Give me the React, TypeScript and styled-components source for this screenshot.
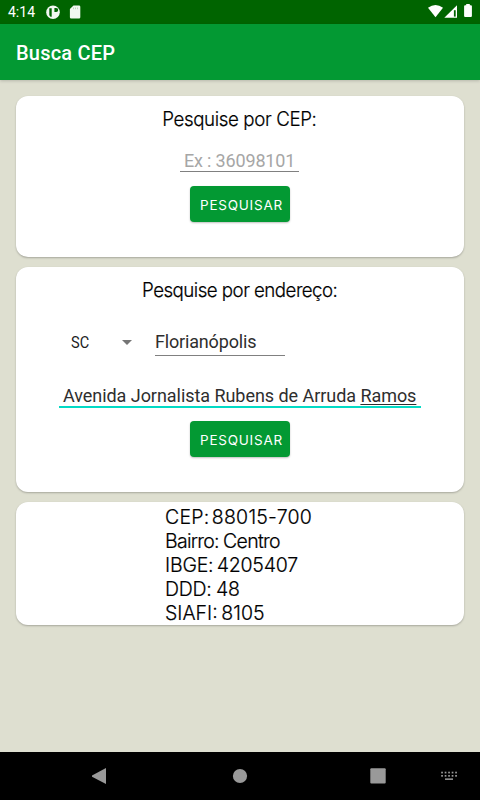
import React from 'react';
import styled, { createGlobalStyle } from 'styled-components';

const GlobalStyle = createGlobalStyle`
  * { box-sizing: border-box; }
  body { margin: 0; background: #dedfd0; }
`;

const Screen = styled.div`
  width: 480px;
  height: 800px;
  display: flex;
  flex-direction: column;
  background: #dedfd0;
  font-family: Roboto, sans-serif;
  overflow: hidden;
`;

const StatusBar = styled.header`
  height: 24px;
  display: flex;
  justify-content: space-between;
  background: #006400;
  color: #fff;
  flex: none;
`;

const Clock = styled.span`
  width: 38px;
  padding-left: 8px;
  font-size: 14px;
  line-height: 24px;
  white-space: nowrap;
`;

const StatusGroup = styled.div`
  display: flex;
`;

const AppBar = styled.div`
  height: 56px;
  flex: none;
  display: flex;
  align-items: center;
  padding: 2px 16px 0;
  background: #039933;
  box-shadow: 0 1px 3px rgba(0, 0, 0, 0.18);
`;

const Title = styled.h1`
  margin: 0;
  font-size: 20px;
  font-weight: 500;
  line-height: 24px;
  letter-spacing: 0.2px;
  color: #fff;
`;

const Content = styled.main`
  flex: 1;
  display: flex;
  flex-direction: column;
  gap: 10px;
  padding: 16px 16px 0;
`;

const Card = styled.section<{ $height: number }>`
  height: ${(p) => p.$height}px;
  display: flex;
  flex-direction: column;
  align-items: center;
  background: #fff;
  border-radius: 12px;
  box-shadow: 0 1px 2px rgba(0, 0, 0, 0.25);
`;

const Heading = styled.h2<{ $spacing: number }>`
  margin: 11px 1px 0 0;
  font-family: Inter, sans-serif;
  font-size: 19.5px;
  font-weight: 300;
  -webkit-text-stroke: 0.2px #000;
  line-height: 24px;
  letter-spacing: ${(p) => p.$spacing}px;
  transform: scaleX(0.96);
  color: #000;
  white-space: nowrap;
`;

const Field = styled.div<{ $width: number; $top: number; $line?: number; $shift?: number; $inset?: number; $active?: boolean; $hint?: boolean }>`
  width: ${(p) => p.$width}px;
  height: ${(p) => (p.$active ? 26 : 25)}px;
  margin-top: ${(p) => p.$top}px;
  margin-right: ${(p) => p.$shift ?? 0}px;
  padding-left: ${(p) => p.$inset ?? 0}px;
  border-bottom: ${(p) => (p.$active ? '2px solid #03dac5' : '1px solid #808080')};
  font-size: 18px;
  line-height: ${(p) => p.$line ?? 28}px;
  letter-spacing: ${(p) => (p.$active ? -0.05 : -0.17)}px;
  color: ${(p) => (p.$hint ? '#a6a6a6' : '#2e2e2e')};
  white-space: nowrap;
`;

const Composing = styled.span`
  text-decoration: underline;
  text-decoration-thickness: 1px;
  text-underline-offset: 2px;
  text-decoration-skip-ink: none;
`;

const SearchButton = styled.button<{ $top: number }>`
  width: 100px;
  height: 36px;
  margin-top: ${(p) => p.$top}px;
  padding: 1px 0 0 3px;
  border: 0;
  border-radius: 4px;
  background: #039933;
  box-shadow: 0 1px 2px rgba(0, 0, 0, 0.25);
  color: #fff;
  font-family: Inter, sans-serif;
  font-size: 13.5px;
  font-weight: 400;
  letter-spacing: 0.77px;
  white-space: nowrap;
`;

const AddressRow = styled.div`
  width: 100%;
  height: 54px;
  display: flex;
`;

const StateSelect = styled.div`
  width: 84px;
  margin-left: 55px;
  padding: 31px 23px 0 0;
  display: flex;
  justify-content: space-between;
  font-size: 16px;
  line-height: 20px;
  color: #1c1c1c;
`;

const StateName = styled.span`
  display: inline-block;
  transform: scaleX(0.91);
  transform-origin: left;
`;

const Arrow = styled.svg`
  margin-top: 7px;
`;

const Result = styled.div`
  width: 150px;
  padding-top: 3px;
  font-family: Inter, sans-serif;
  font-size: 19.5px;
  font-weight: 300;
  -webkit-text-stroke: 0.2px #000;
  line-height: 24px;
  color: #000;
`;

const ResultLine = styled.div<{ $spacing: number; $gap: number }>`
  letter-spacing: ${(p) => p.$spacing}px;
  word-spacing: ${(p) => p.$gap}px;
  white-space: nowrap;
`;

const NavBar = styled.nav`
  height: 48px;
  flex: none;
  background: #000;
`;

const results = [
  { text: 'CEP: 88015-700', spacing: 0.22, gap: -3.3 },
  { text: 'Bairro: Centro', spacing: -0.72, gap: -0.5 },
  { text: 'IBGE: 4205407', spacing: -0.2, gap: -2 },
  { text: 'DDD: 48', spacing: -0.3, gap: -0.5 },
  { text: 'SIAFI: 8105', spacing: 0, gap: -1.8 },
];

const keyColumns = [442, 445.5, 449, 452.5, 456];

export default function App() {
  return (
    <Screen>
      <GlobalStyle />
      <StatusBar>
        <StatusGroup>
          <Clock>4:14</Clock>
          <svg width="46" height="24" viewBox="38 0 46 24">
            <circle cx="53" cy="12.2" r="6.8" fill="#f2f8f2" />
            <path d="M49.3 8.2h2.4v8.5h-1.2A6 6 0 0 1 49.3 15zM54.4 8h1.8a2 2 0 0 1 0 4h-1.8z" fill="#006400" />
            <path d="M73.5 5.5H79a1.3 1.3 0 0 1 1.3 1.3v10.4a1.3 1.3 0 0 1-1.3 1.3h-7.8a1.3 1.3 0 0 1-1.3-1.3V9z" fill="#f2f8f2" />
            <path d="M73.5 7.5v1.7M75.5 7.5v1.7M77.5 7.5v1.7" stroke="#b0ceb0" strokeWidth="0.8" />
          </svg>
        </StatusGroup>
        <svg width="60" height="24" viewBox="420 0 60 24">
          <path d="M428 7.7Q435.5 2.5 443 7.7L435.5 17.3z" fill="#fff" />
          <path d="M444.3 17.8 457 5.3v12.5z" fill="#fff" />
          <path d="M453.9 10.2h1.8v6.4h-1.8z" fill="#006400" />
          <path d="M466.2 4h3.6v1.2h1.1a1 1 0 0 1 1 1v9.9a1 1 0 0 1-1 1h-5.8a1 1 0 0 1-1-1V6.2a1 1 0 0 1 1-1h1.1z" fill="#fff" />
        </svg>
      </StatusBar>
      <AppBar>
        <Title>Busca CEP</Title>
      </AppBar>
      <Content>
        <Card $height={161}>
          <Heading $spacing={-0.4}>Pesquise por CEP:</Heading>
          <Field $width={119} $top={16} $inset={4} $shift={1} $hint>Ex : 36098101</Field>
          <SearchButton $top={14}>PESQUISAR</SearchButton>
        </Card>
        <Card $height={225}>
          <Heading $spacing={-0.56}>Pesquise por endereço:</Heading>
          <AddressRow>
            <StateSelect>
              <StateName>SC</StateName>
              <Arrow width="10" height="5" viewBox="0 0 10 5">
                <path d="M0 0h10L5 5z" fill="#757575" />
              </Arrow>
            </StateSelect>
            <Field $width={130} $top={29} $line={22}>Florianópolis</Field>
          </AddressRow>
          <Field $width={362} $top={26} $inset={4} $active>
            Avenida Jornalista Rubens de Arruda <Composing>Ramos</Composing>
          </Field>
          <SearchButton $top={13}>PESQUISAR</SearchButton>
        </Card>
        <Card $height={123}>
          <Result>
            {results.map((r) => (
              <ResultLine key={r.text} $spacing={r.spacing} $gap={r.gap}>{r.text}</ResultLine>
            ))}
          </Result>
        </Card>
      </Content>
      <NavBar>
        <svg width="480" height="48" viewBox="0 0 480 48">
          <g fill="#999">
            <path d="M106 16v16L92 24.8v-1.2z" />
            <circle cx="240" cy="24" r="7.1" />
            <rect x="370.3" y="16.2" width="15.4" height="15.4" rx="1" />
            {keyColumns.map((x) => (
              <React.Fragment key={x}>
                <rect x={x - 0.8} y="19.7" width="1.7" height="1.7" />
                <rect x={x - 0.8} y="23" width="1.7" height="1.7" />
              </React.Fragment>
            ))}
            <rect x="445" y="26.4" width="8" height="1.5" />
          </g>
        </svg>
      </NavBar>
    </Screen>
  );
}
